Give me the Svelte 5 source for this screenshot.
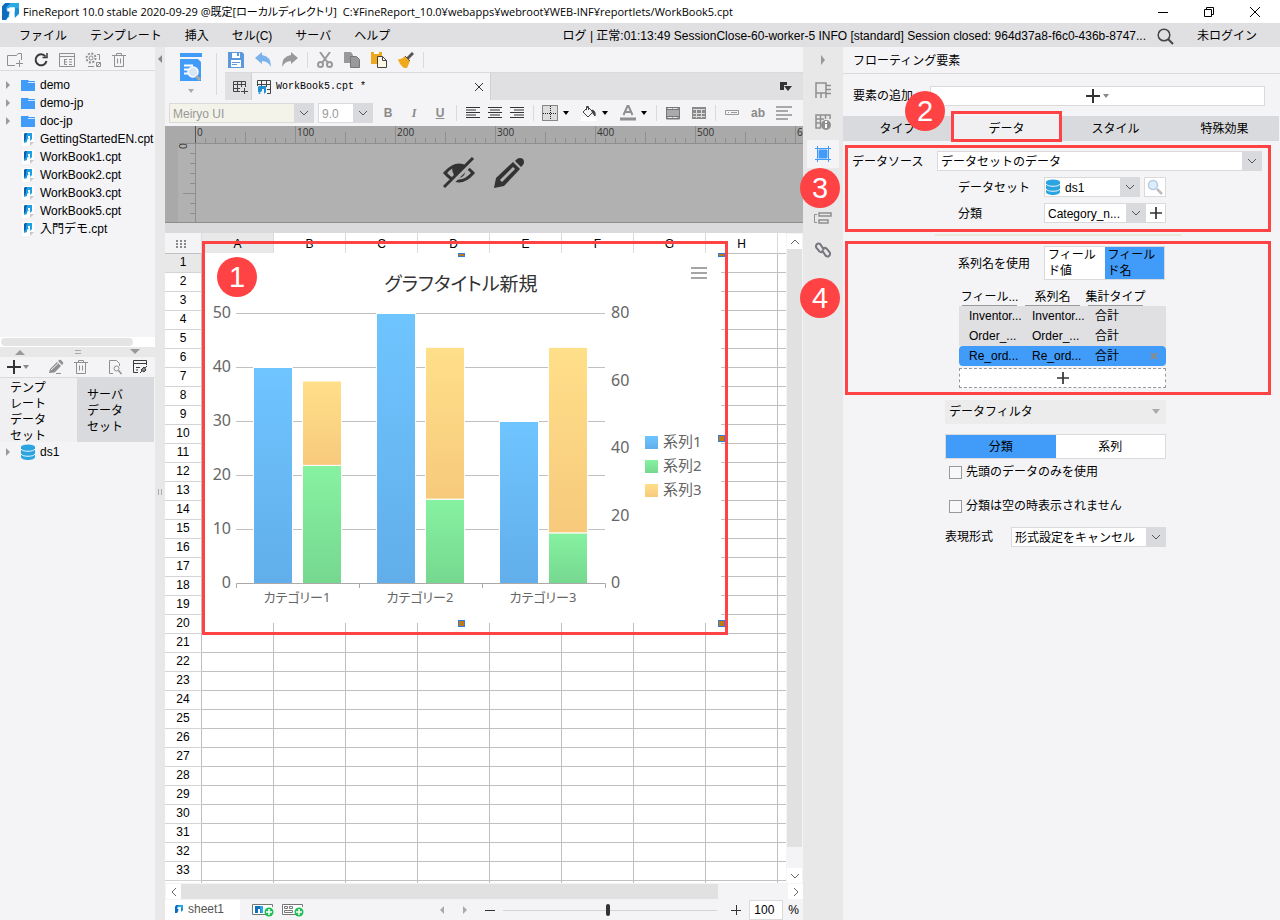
<script>
  const menus = ['ファイル', 'テンプレート', '挿入', 'セル(C)', 'サーバ', 'ヘルプ'];
  const folders = ['demo', 'demo-jp', 'doc-jp'];
  const files = [
    'GettingStartedEN.cpt',
    'WorkBook1.cpt',
    'WorkBook2.cpt',
    'WorkBook3.cpt',
    'WorkBook5.cpt',
    '入門デモ.cpt',
  ];
  const columns = ['A', 'B', 'C', 'D', 'E', 'F', 'G', 'H'];
  const rows = Array.from({ length: 34 }, (_, i) => i + 1);
  const panelTabs = ['タイプ', 'データ', 'スタイル', '特殊効果'];
  const fields = [
    ['Inventor...', 'Inventor...', '合計'],
    ['Order_...', 'Order_...', '合計'],
    ['Re_ord...', 'Re_ord...', '合計'],
  ];

  // chart
  const base = 330;
  const categories = [
    { name: 'カテゴリー1', s1: 40, s2: 35, s3: 25 },
    { name: 'カテゴリー2', s1: 50, s2: 25, s3: 45 },
    { name: 'カテゴリー3', s1: 30, s2: 15, s3: 55 },
  ];
  const legend = ['系列1', '系列2', '系列3'];
  const left = (v) => v * 5.4;
  const right = (v) => v * 3.375;

  let panelTab = $state('データ');
  let seriesMode = $state('name');
  let filterMode = $state('category');
  let selected = $state(2);
  let zoom = $state(100);

  // one tick every 10 units, as many as the ruler has room for
  let rulerWidth = $state(0);
  let ticks = $derived(Array.from({ length: Math.max(0, Math.floor((rulerWidth - 30) / 10) + 1) }, (_, i) => i));
</script>

{#snippet logo(size)}
  <svg width={size} height={size} viewBox="0 0 16 16">
    <path d="M3 0h13v10l-4 2V4H7v3h3l-3 3v3l-4 3z" fill="#29abe2" />
    <path d="M3 0h5L4 4v3h4l-4 9H0V3z" fill="#0d6cbf" />
    <path d="M12 5h4v5l-4 4z" fill="#1b8fd6" />
    <path d="M5 5h7v3H9v6l-2 1V8H5z" fill="#fff" />
  </svg>
{/snippet}

{#snippet fileIcon()}
  <svg width="14" height="16" viewBox="0 0 14 16">
    <path d="M1 1h12v9l-4 5H1z" fill="#fff" />
    <path d="M9 11h4l-4 4z" fill="#c8c8c8" />
    <path d="M4 2h7v6l-2 2V5H7v2h1L6 9v2L3 12z" fill="#1d9fe0" />
    <path d="M4 2h2L5 5v3l-2 3V3z" fill="#0b5fae" />
  </svg>
{/snippet}

{#snippet db()}
  <svg width="14" height="16" viewBox="1 0 14 16">
    <path d="M1 3v10c0 4 14 4 14 0V3z" fill="#2aa5e2" />
    <ellipse cx="8" cy="3" rx="7" ry="2.6" fill="#2aa5e2" />
    <path d="M1 5c1 3 13 3 14 0M1 10c1 3 13 3 14 0" fill="none" stroke="#f4f4f7" />
  </svg>
{/snippet}

{#snippet trash()}
  <svg width="16" height="16" viewBox="0 0 16 16" fill="none" stroke="#8f8f8f">
    <path d="M1 3.500h14M5.500 3V1.500h5V3M3.500 4v10.500h9V4M6.500 6.500v5M9.500 6.500v5" />
  </svg>
{/snippet}

{#snippet plus(size)}
  <svg width={size} height={size} viewBox="0 0 14 14"><path d="M7 0v14M0 7h14" stroke="#333" stroke-width="2" /></svg>
{/snippet}

{#snippet caret(color)}
  <svg width="8" height="6" viewBox="0 0 8 6"><path d="M1 1h6L4 5z" fill={color} /></svg>
{/snippet}

{#snippet chevron()}
  <svg class="chevron" width="10" height="6" viewBox="0 0 10 6"><path d="M1 1l4 4 4-4" fill="none" stroke="#555" /></svg>
{/snippet}

{#snippet lines(color, widths, from)}
  <svg width="16" height="14" viewBox="0 0 16 14" stroke={color} stroke-width="1">
    {#each widths as w, i}
      <path d="M{from === 'right' ? 15 - w : from === 'center' ? 8 - w / 2 : 1} {i * 2.5 + 1.5}h{w}" />
    {/each}
  </svg>
{/snippet}

<div class="app">
  <header class="titlebar">
    {@render logo(17)}
    <span class="title">FineReport 10.0 stable 2020-09-29 @既定[ローカルディレクトリ]</span>
    <span>C:¥FineReport_10.0¥webapps¥webroot¥WEB-INF¥reportlets/WorkBook5.cpt</span>
    <div class="window-buttons">
      <button aria-label="最小化"><svg width="12" height="12"><path d="M1 6.500h10" stroke="#000" /></svg></button>
      <button aria-label="元に戻す">
        <svg width="12" height="12" fill="none" stroke="#000"><path d="M1.500 3.500h7v7h-7zM3.500 3V1.500h7v7H9" /></svg>
      </button>
      <button aria-label="閉じる"><svg width="12" height="12"><path d="M1 1l10 10M11 1L1 11" stroke="#000" /></svg></button>
    </div>
  </header>

  <nav class="menubar">
    {#each menus as menu}
      <button>{menu}</button>
    {/each}
    <span class="log">ログ | 正常:01:13:49 SessionClose-60-worker-5 INFO [standard] Session closed: 964d37a8-f6c0-436b-8747...</span>
    <button class="search" aria-label="検索">
      <svg width="17" height="17" viewBox="0 0 17 17" fill="none" stroke="#444" stroke-width="1.500">
        <circle cx="7" cy="7" r="5.800" /><path d="M11 11l5 5" stroke-width="2" />
      </svg>
    </button>
    <button class="login">未ログイン</button>
  </nav>

  <div class="workspace">
    <aside class="left">
      <div class="tools">
        <button aria-label="新規フォルダ">
          <svg width="16" height="16" viewBox="0 0 16 16" fill="none" stroke="#8f8f8f"><path d="M8 13.500H.5v-10h9L11 1.500h3.500V8M12.500 8v7M9 11.500h7" /></svg>
        </button>
        <button aria-label="更新">
          <svg width="16" height="16" viewBox="0 0 16 16" fill="none" stroke="#3a3a3a" stroke-width="2"><path d="M12.500 4.500A5.500 5.500 0 1 0 13.500 9" /><path d="M9.500 5.500H14V1" stroke-width="1.500" /></svg>
        </button>
        <button aria-label="表示">
          <svg width="16" height="16" viewBox="0 0 16 16" fill="none" stroke="#8f8f8f"><path d="M.5 1.500h15v13H.5zM0 4.500h16M5.500 7v5.500M5.500 7.500H8M5.500 10H8M5.500 12.500H8M10 7.500h3M10 10h3M10 12.500h3" /></svg>
        </button>
        <button aria-label="設定">
          <svg width="16" height="16" viewBox="0 0 16 16" fill="none" stroke="#8f8f8f"><circle cx="6" cy="6" r="4.500" stroke-width="2" stroke-dasharray="2 1.500" /><circle cx="6" cy="6" r="2" /><path d="M12 2.500h2.500V8M3 14.500h6M11.500 10.500h4v4h-4zM12 14l3-3" /></svg>
        </button>
        <button aria-label="削除">{@render trash()}</button>
      </div>
      <ul class="tree">
        {#each folders as name}
          <li>
            <svg class="toggle" width="6" height="10"><path d="M1 1l4 4-4 4z" fill="#999" /></svg>
            <svg width="14" height="12"><path d="M0 1h7l1 1h6v10H0z" fill="#419bf9" /><path d="M7 3.500h7" stroke="#cfe4fd" /></svg>
            {name}
          </li>
        {/each}
        {#each files as name}
          <li><span class="toggle"></span>{@render fileIcon()}{name}</li>
        {/each}
      </ul>
      <div class="tree-scroll"><i></i></div>
      <div class="fold">
        <svg width="12" height="6"><path d="M1 6l5-5 5 5z" fill="#999" /></svg>
        <svg width="6" height="6" stroke="#aaa"><path d="M0 1.500h6M0 4.500h6" /></svg>
        <svg width="12" height="6"><path d="M1 0l5 5 5-5z" fill="#999" /></svg>
      </div>
      <div class="tools data-tools">
        <button class="add" aria-label="追加">{@render plus(14)}{@render caret('#888')}</button>
        <i class="sep"></i>
        <button aria-label="編集">
          <svg width="16" height="16" viewBox="0 0 16 16" fill="#8f8f8f"><path d="M1 14l1-4L9 3l4 4-6.500 6.500zM10 2l1-1q1-1 3 1t1 3l-1 1z" /><path d="M3 11L10 4.500" stroke="#f4f4f7" /><path d="M8 14.500h5" stroke="#8f8f8f" /></svg>
        </button>
        <button aria-label="削除">{@render trash()}</button>
        <i class="sep"></i>
        <button aria-label="プレビュー">
          <svg width="16" height="16" viewBox="0 0 16 16" fill="none" stroke="#8f8f8f"><path d="M6 14.500H2.500v-13h7l3 3V7" /><circle cx="9.500" cy="9.500" r="2.500" /><path d="M11.500 11.500l3 3.500" stroke-width="1.500" /></svg>
        </button>
        <button aria-label="接続">
          <svg width="16" height="16" viewBox="0 0 16 16" fill="none" stroke="#3a3a3a"><path d="M6 13.500H1.500v-12h13V6M1 4.500h14M4 8.500h4M4 11h2M8 14l2-2M13 9l2-2" /><path d="M9 11l3-3 2 3-2 2z" fill="#888" /></svg>
        </button>
      </div>
      <div class="data-tabs">
        <button class="active">テンプレートデータセット</button>
        <button>サーバデータセット</button>
      </div>
      <ul class="tree datasets">
        <li><svg class="toggle" width="6" height="10"><path d="M1 1l4 4-4 4z" fill="#999" /></svg>{@render db()}ds1</li>
      </ul>
    </aside>

    <div class="splitter">
      <svg width="6" height="10"><path d="M5 1L1 5l4 4z" fill="#888" /></svg>
      <svg class="grip" width="6" height="6" stroke="#aaa"><path d="M1.500 0v6M4.500 0v6" /></svg>
    </div>

    <main class="center">
      <div class="top">
        <button class="preview" aria-label="プレビュー">
          <svg width="22" height="30" viewBox="0 0 22 30">
            <path d="M0 0h22v4H0zM0 6h18l3 3v19H0z" fill="#419bf9" />
            <path d="M4 12.500h9M4 16.500h4M4 20.500h4" stroke="#fff" stroke-width="2" />
            <circle cx="13" cy="19" r="5" fill="#d6e6f5" stroke="#fff" stroke-width="1.500" />
            <path d="M16 23l4 4" stroke="#aaa" stroke-width="2.500" />
          </svg>
          {@render caret('#aaa')}
        </button>
        <div class="top-rows">
          <div class="actions">
            <button aria-label="保存">
              <svg width="16" height="16" viewBox="0 0 16 16"><path d="M0 0h14l2 2v14H0z" fill="#5c98dc" /><path d="M4 1h8v5H4zM3 8h10v7H3z" fill="#fff" /><path d="M9 1h2v3H9zM4 10h8v1H4zM4 12h5v1H4z" fill="#5c98dc" /></svg>
            </button>
            <button aria-label="元に戻す">
              <svg width="16" height="16" viewBox="0 0 16 16"><path d="M0 6l7-6v3q9 1 9 12-3-6-9-6v3z" fill="#7bb2ec" /></svg>
            </button>
            <button aria-label="やり直し">
              <svg width="16" height="16" viewBox="0 0 16 16"><path d="M16 6L9 0v3Q0 4 0 15q3-6 9-6v3z" fill="#999" /></svg>
            </button>
            <i class="sep"></i>
            <button aria-label="切り取り">
              <svg width="16" height="16" viewBox="0 0 16 16" fill="none" stroke="#999" stroke-width="2"><path d="M3 0l8 11M13 0L5 11" /><circle cx="3.500" cy="12.500" r="2.500" /><circle cx="12.500" cy="12.500" r="2.500" /></svg>
            </button>
            <button aria-label="コピー">
              <svg width="16" height="16" viewBox="0 0 16 16" fill="#999"><path d="M0 0h7l2 3v8H0z" /><path d="M6.500 4.500h6l3 3v8h-9z" stroke="#777" /></svg>
            </button>
            <button aria-label="貼り付け">
              <svg width="16" height="16" viewBox="0 0 16 16"><path d="M0 0h11v12H0z" fill="#f0a81c" /><path d="M3 0h5v2H3z" fill="#fff" /><path d="M6.500 4.500h5l4 4v7h-9z" fill="#fff8e8" stroke="#444" /><path d="M11.500 4.500v4h4" fill="none" stroke="#444" /></svg>
            </button>
            <button aria-label="書式のコピー">
              <svg width="16" height="16" viewBox="0 0 16 16"><path d="M15 1L9 7" stroke="#555" stroke-width="3" /><path d="M7 4l5 5-3 7H6Q1 12 0 7q4 1 7-3z" fill="#f0a81c" /><path d="M7 4l5 5" stroke="#555" /></svg>
            </button>
            <i class="sep"></i>
          </div>
          <div class="doc-tabs">
            <button class="new-tab" aria-label="新規">
              <svg width="16" height="16" viewBox="0 0 16 16" fill="none" stroke="#444"><path d="M8 12.500H1.500v-10h12V8M1 5.500h13M1 9.500h7M5.500 2v11M9.500 2v6M12.500 9v6M9 12.500h7" /></svg>
            </button>
            <div class="doc-tab">
              <svg width="14" height="14" viewBox="0 0 14 14"><path d="M.5 6V.5h13v13H10M0 4.500h14M4.500 0v6M9.500 0v7M10 9.500h4" fill="none" stroke="#444" /><path d="M2 6h7v6l-2 2V9H5v2l-4 3h3L1 12V7z" fill="#1d8fd6" /></svg>
              <span>WorkBook5.cpt *</span>
              <button aria-label="閉じる"><svg width="10" height="10"><path d="M1 1l8 8M9 1L1 9" stroke="#333" /></svg></button>
            </div>
            <button class="tab-list" aria-label="タブ一覧">
              <svg width="12" height="10"><path d="M0 0h7v3H4v5H0z" fill="#333" /><path d="M4 4h8L8 9z" fill="#333" /></svg>
            </button>
          </div>
        </div>
      </div>

      <div class="format">
        <div class="select font">
          <select aria-label="フォント" disabled><option>Meiryo UI</option></select>{@render chevron()}
        </div>
        <div class="select size">
          <select aria-label="サイズ" disabled><option>9.0</option></select>{@render chevron()}
        </div>
        <div class="group wide text-style">
          <button><b>B</b></button><button><em>I</em></button><button><u>U</u></button>
        </div>
        <i class="sep"></i>
        <div class="group">
          <button aria-label="左揃え">{@render lines('#333', [14, 10, 14, 10, 14], 'left')}</button>
          <button aria-label="中央揃え">{@render lines('#333', [14, 10, 14, 10, 14], 'center')}</button>
          <button aria-label="右揃え">{@render lines('#333', [14, 10, 14, 10, 14], 'right')}</button>
        </div>
        <i class="sep"></i>
        <div class="group drops">
          <button aria-label="罫線">
            <svg width="16" height="16" viewBox="0 0 16 16" fill="#ddd" stroke="#222" stroke-dasharray="1 1"><path d="M.5 .5h15v15H.5zM8.500 1v14M1 8.500h14" /></svg>
            {@render caret('#000')}
          </button>
          <button aria-label="塗りつぶし">
            <svg width="16" height="16" viewBox="0 0 16 16" fill="none" stroke="#444"><path d="M0 12h16v4H0z" fill="#fff" stroke="none" /><path d="M2 7l5-5 5 5-5 5zM5.500 5V1.500h2V5" /><path d="M11 5q4 1 3 6l-3-4z" fill="#444" /></svg>
            {@render caret('#000')}
          </button>
          <button aria-label="文字色">
            <svg width="16" height="16" viewBox="0 0 16 16" fill="none" stroke="#8f8f8f" stroke-width="2"><path d="M3.500 10L7.500 1h1l4 9M5 7h6" /><path d="M0 14h16" stroke-width="3" /></svg>
            {@render caret('#000')}
          </button>
        </div>
        <i class="sep"></i>
        <div class="group wide">
          <button aria-label="結合">
            <svg width="16" height="14" viewBox="0 0 16 14"><path d="M1 1h14v12H1z" fill="#aaa" /><path d="M1.500 1v12h13V1M1 3.500h14M1 10.500h14M1 1.500h14M1 12.500h14" fill="none" stroke="#777" /><path d="M3 2.500h10M3 11.500h10" stroke="#e8e8e8" stroke-dasharray="4 1" /></svg>
          </button>
          <button aria-label="結合解除">
            <svg width="16" height="14" viewBox="0 0 16 14"><path d="M1 1h14v12H1z" fill="#8a8a8a" /><path d="M2 3.500h12M2 7.500h12M2 10.500h12M5.500 3v9M10.500 3v9" stroke="#ddd" /></svg>
          </button>
        </div>
        <i class="sep"></i>
        <div class="group wide">
          <button aria-label="ウィジェット">
            <svg width="16" height="8" viewBox="0 0 16 8" fill="none" stroke="#999"><path d="M1.500 1.500h13v4h-13zM4 3.500h1M7 3.500h6" /></svg>
          </button>
          <button class="ab">ab</button>
          <button aria-label="段落">
            <svg width="16" height="14" viewBox="0 0 16 14" stroke="#8f8f8f" stroke-width="1.500"><path d="M0 1h16M0 5h12M0 9h16M0 13h12" /></svg>
          </button>
        </div>
      </div>

      <div class="banner" bind:clientWidth={rulerWidth}>
        <svg class="ruler" width="100%" height="97">
          <rect width="100%" height="17" fill="#a9a9a9" />
          <rect width="13" height="97" fill="#a9a9a9" />
          <path d="M30.500 0v97" stroke="#8e8e8e" />
          <rect x="30" y="17" width="100%" height="1" fill="#8e8e8e" />
          {#each ticks as i}
            <path d="M{30.5 + i * 10} {i % 10 === 0 ? 0 : i % 5 === 0 ? 6 : 12}V17" stroke={i === 0 ? '#555' : '#8e8e8e'} />
            {#if i % 10 === 0}<text x={32 + i * 10} y="10">{i * 10}</text>{/if}
            {#if i < 8}<path d="M{i === 0 ? 14 : i === 5 ? 18 : 25} {17.5 + i * 10}H30" stroke="#8e8e8e" />{/if}
          {/each}
          <text transform="translate(22 23) rotate(-90)">0</text>
        </svg>
        <div class="banner-tools">
          <button aria-label="非表示">
            <svg width="32" height="32" viewBox="0 0 32 32" fill="none" stroke="#333" stroke-width="3">
              <path d="M2 16Q16 0 30 16Q16 32 2 16z" /><path d="M9 10q8-5 14 0 0 10-7 11-7-1-7-11z" fill="#333" stroke="none" />
              <path d="M3 31L31 3" stroke="#b1b1b1" stroke-width="5" /><path d="M1 30L30 1" stroke-width="3" />
            </svg>
          </button>
          <button aria-label="編集">
            <svg width="32" height="32" viewBox="0 0 32 32" fill="#333">
              <path d="M1 31l2-10L20 5l7 7-16 17z" /><path d="M22 4l2-2q3-2 6 0 2 3 0 6l-2 2z" />
              <path d="M8 24L21 11" stroke="#b1b1b1" stroke-width="3" />
            </svg>
          </button>
        </div>
      </div>

      <div class="sheet-area">
        <div class="sheet">
          <table>
            <colgroup>
              <col class="row-head" />
              {#each columns as c}<col class="cell" />{/each}
              <col />
            </colgroup>
            <thead>
              <tr>
                <th class="corner">
                  <svg width="12" height="9" fill="#8a8a8a">
                    {#each [0, 3, 6] as y}{#each [0, 4, 8] as x}<rect {x} {y} width="2" height="2" />{/each}{/each}
                  </svg>
                </th>
                {#each columns as c, i}<th class:current={i === 0}>{c}</th>{/each}
                <th></th>
              </tr>
            </thead>
            <tbody>
              {#each rows as r}
                <tr>
                  <th class:current={r === 1}>{r}</th>
                  {#each columns as c}<td></td>{/each}
                  <td></td>
                </tr>
              {/each}
            </tbody>
          </table>

          <!-- floating chart element -->
          <div class="floating">
            <svg class="chart" width="519" height="370" viewBox="0 0 519 370">
              <defs>
                <linearGradient id="s1" x2="0" y2="1"><stop stop-color="#6fc5ff" /><stop offset="1" stop-color="#61aeea" /></linearGradient>
                <linearGradient id="s2" x2="0" y2="1"><stop stop-color="#86f2a1" /><stop offset="1" stop-color="#76d88f" /></linearGradient>
                <linearGradient id="s3" x2="0" y2="1"><stop stop-color="#ffdf8a" /><stop offset="1" stop-color="#f7ca7b" /></linearGradient>
              </defs>
              <text class="chart-title" x="259" y="38" text-anchor="middle">グラフタイトル新規</text>
              <path d="M489 15h16M489 20h16M489 25h16" stroke="#a5a5a5" stroke-width="2" />
              {#each [0, 10, 20, 30, 40, 50] as v}
                <text x="29" y={base - left(v) + 5} text-anchor="end">{v}</text>
                {#if v}<path d="M34 {base - left(v) + 0.5}h369" stroke="#c0c0c0" />{/if}
              {/each}
              {#each [0, 20, 40, 60, 80] as v}
                <text x="409" y={base - right(v) + 5}>{v}</text>
              {/each}
              {#each categories as c, i}
                <g stroke="#fff">
                  <rect x={51.5 + i * 123} y={base - left(c.s1) + 0.5} width="39" height={left(c.s1)} fill="url(#s1)" />
                  <rect x={100.5 + i * 123} y={base - right(c.s2) + 0.5} width="39" height={right(c.s2)} fill="url(#s2)" />
                  <rect x={100.5 + i * 123} y={base - right(c.s2 + c.s3) + 0.5} width="39" height={right(c.s3)} fill="url(#s3)" />
                </g>
                <text class="category" x={95 + i * 123} y="349" text-anchor="middle">{c.name}</text>
              {/each}
              <path d="M34.500 335v-4.500h369v4.500M157.500 331v4M280.500 331v4" fill="none" stroke="#aaa" />
              {#each legend as name, i}
                <rect x="443" y={183 + i * 24} width="13" height="13" fill="url(#s{i + 1})" />
                <text class="legend" x="461" y={194 + i * 24}>{name}</text>
              {/each}
            </svg>
            <i class="handle n"></i><i class="handle ne"></i><i class="handle e"></i>
            <i class="handle se"></i><i class="handle s"></i>
          </div>
          <div class="mark chart-mark"></div>
          <span class="badge b1">1</span>
        </div>
        <div class="vscroll">
          <button aria-label="上へ"><svg width="10" height="6"><path d="M1 5l4-4 4 4" fill="none" stroke="#666" /></svg></button>
          <i></i><span></span>
          <button aria-label="下へ"><svg width="10" height="6"><path d="M1 1l4 4 4-4" fill="none" stroke="#666" /></svg></button>
        </div>
      </div>

      <div class="hscroll">
        <button aria-label="左へ"><svg width="6" height="10"><path d="M5 1L1 5l4 4" fill="none" stroke="#666" /></svg></button>
        <i></i><span></span>
        <button aria-label="右へ"><svg width="6" height="10"><path d="M1 1l4 4-4 4" fill="none" stroke="#666" /></svg></button>
      </div>

      <div class="sheet-bar">
        <button class="sheet-tab">{@render logo(8)}sheet1</button>
        <button class="add-sheet" aria-label="シート追加">
          <svg width="22" height="14" viewBox="0 0 22 14"><path d="M16 11.500H.5v-10h20V4" fill="#fff" stroke="#777" /><path d="M3 3h7v7H8V6H6v4H3z" fill="#0f6fc0" /><path d="M8 3h3v7H9z" fill="#29abe2" /><circle cx="17" cy="9" r="4.500" fill="#1fbf55" /><path d="M17 6v6M14 9h6" stroke="#fff" stroke-width="1.500" /></svg>
        </button>
        <button class="add-sheet" aria-label="フォーム追加">
          <svg width="22" height="14" viewBox="0 0 22 14"><path d="M16 11.500H.5v-10h20V4M2.500 3.500h3v2h-3zM7.500 3.500h3v2h-3zM2.500 7.500h8v2h-8z" fill="#fff" stroke="#777" /><circle cx="17" cy="9" r="4.500" fill="#1fbf55" /><path d="M17 6v6M14 9h6" stroke="#fff" stroke-width="1.500" /></svg>
        </button>
        <div class="zoom">
          <button aria-label="前のシート"><svg width="6" height="8"><path d="M5 0L1 4l4 4z" fill="#aaa" /></svg></button>
          <button aria-label="次のシート"><svg width="6" height="8"><path d="M1 0l4 4-4 4z" fill="#aaa" /></svg></button>
          <button aria-label="縮小"><svg width="10" height="10"><path d="M0 5.500h10" stroke="#333" /></svg></button>
          <input type="range" min="10" max="194" aria-label="ズーム" bind:value={zoom} />
          <button aria-label="拡大"><svg width="10" height="10"><path d="M0 5.500h10M5.500 0v10" stroke="#333" /></svg></button>
          <label><input type="text" bind:value={zoom} />%</label>
        </div>
      </div>
    </main>

    <div class="rail">
      <button class="collapse" aria-label="折りたたむ"><svg width="6" height="10"><path d="M1 0l4 5-4 5z" fill="#999" /></svg></button>
      <button aria-label="セル要素">
        <svg width="16" height="16" viewBox="0 0 16 16" fill="none" stroke="#8f8f8f"><path d="M1 16V1h10v10H1M11 1v15M6 11v5M11 3.500h5M11 7.500h5M11 11.500h5" stroke-width="1.500" /></svg>
      </button>
      <button aria-label="セル属性">
        <svg width="16" height="16" viewBox="0 0 16 16" fill="none" stroke="#8f8f8f"><path d="M6 14H1V1h14v4M1 5h8M1 9h5M5.500 1v13M10.500 1v4" stroke-width="1.500" /><circle cx="11" cy="11" r="5" fill="#8f8f8f" stroke="none" /><path d="M11 10v4M11 7v2" stroke="#fff" stroke-width="2" /></svg>
      </button>
      <button class="active" aria-label="フローティング要素">
        <svg width="16" height="16" viewBox="0 0 16 16" fill="none" stroke="#419bf9"><path d="M2.500 0v16M13.500 0v16M0 2.500h16M0 13.500h16" /><path d="M4 4h8v8H4z" fill="#419bf9" /></svg>
      </button>
      <button aria-label="ウィジェット設定"><svg width="16" height="16" fill="none" stroke="#8f8f8f"><path d="M1.500 4.500h13v7h-13z" /></svg></button>
      <button aria-label="条件属性">
        <svg width="18" height="14" viewBox="0 0 18 14" fill="none" stroke="#8f8f8f"><path d="M3 3.500H.5v8H3" /><path d="M5 2h12v3H5zM5 9h9v3H5z" stroke-width="1.500" /></svg>
      </button>
      <button aria-label="ハイパーリンク">
        <svg width="16" height="16" viewBox="0 0 16 16" fill="none" stroke="#77777f" stroke-width="2"><path d="M9 8L5.500 2.500Q3.500 .5 1.800 2.300 .2 4 1.500 6L4.500 9.500q2 1.500 4 0" /><path d="M7 8l3.500 5.500q2 2 3.700 .2 1.600-1.700 .3-3.700L11.500 6.500q-2-1.500-4 0" /></svg>
      </button>
      <span class="badge b3">3</span>
      <span class="badge b4">4</span>
    </div>

    <aside class="panel">
      <h2>フローティング要素</h2>
      <div class="add-row">
        <span>要素の追加</span>
        <button aria-label="要素の追加">{@render plus(14)}{@render caret('#888')}</button>
        <span class="badge b2">2</span>
      </div>
      <div class="panel-tabs">
        {#each panelTabs as tab}
          <button class:active={panelTab === tab} onclick={() => (panelTab = tab)}>
            {tab}
            {#if tab === 'データ'}<span class="mark tab-mark"></span>{/if}
          </button>
        {/each}
      </div>

      <section class="source">
        <div class="field main-field">
          <label for="source">データソース</label>
          <div class="select"><select id="source"><option>データセットのデータ</option></select>{@render chevron()}</div>
        </div>
        <div class="field">
          <label for="dataset">データセット</label>
          <div class="select dataset">{@render db()}<select id="dataset"><option>ds1</option></select>{@render chevron()}</div>
          <button class="box" aria-label="プレビュー">
            <svg width="16" height="16" viewBox="0 0 16 16"><circle cx="6" cy="6" r="4.500" fill="#dbeeff" stroke="#b5c9e0" stroke-width="1.500" /><path d="M10 10l5 5" stroke="#bbb" stroke-width="2.500" /></svg>
          </button>
        </div>
        <div class="field">
          <label for="category">分類</label>
          <div class="select category-select"><select id="category"><option>Category_n...</option></select>{@render chevron()}</div>
          <button class="box joined" aria-label="追加">{@render plus(12)}</button>
        </div>
        <div class="mark"></div>
      </section>

      <hr />

      <section class="series">
        <div class="field">
          <span class="label">系列名を使用</span>
          <div class="switch series-switch">
            <button class:active={seriesMode === 'value'} onclick={() => (seriesMode = 'value')}>フィールド値</button>
            <button class:active={seriesMode === 'name'} onclick={() => (seriesMode = 'name')}>フィールド名</button>
          </div>
        </div>
        <table class="fields">
          <colgroup><col class="wide-col" /><col class="wide-col" /><col /><col class="remove-col" /></colgroup>
          <thead>
            <tr><th><span>フィール...</span></th><th><span>系列名</span></th><th colspan="2"><span>集計タイプ</span></th></tr>
          </thead>
          <tbody>
            {#each fields as row, i}
              <tr class:selected={selected === i} onclick={() => (selected = i)}>
                {#each row as value}<td>{value}</td>{/each}
                <td class="remove">
                  {#if selected === i}
                    <button aria-label="削除"><svg width="8" height="8"><path d="M1 1l6 6M7 1L1 7" stroke="#8a8a8a" stroke-width="2" /></svg></button>
                  {/if}
                </td>
              </tr>
            {/each}
          </tbody>
        </table>
        <button class="add-field" aria-label="追加">{@render plus(12)}</button>
        <div class="mark"></div>
      </section>

      <section class="filter">
        <button class="filter-head">データフィルタ<svg width="10" height="6"><path d="M1 0h8L5 5z" fill="#aaa" /></svg></button>
        <div class="switch">
          <button class:active={filterMode === 'category'} onclick={() => (filterMode = 'category')}>分類</button>
          <button class:active={filterMode === 'series'} onclick={() => (filterMode = 'series')}>系列</button>
        </div>
        <label class="check"><input type="checkbox" />先頭のデータのみを使用</label>
        <label class="check"><input type="checkbox" />分類は空の時表示されません</label>
        <div class="present">
          <label for="present">表現形式</label>
          <div class="select"><select id="present"><option>形式設定をキャンセル</option></select>{@render chevron()}</div>
        </div>
      </section>
    </aside>
  </div>
</div>

<style>
  :global(body) {
    margin: 0;
  }

  .app {
    display: flex;
    flex-direction: column;
    height: 100vh;
    overflow: hidden;
    background: #f4f4f7;
    color: #000;
    font-family: 'Liberation Sans', 'Noto Sans CJK JP', sans-serif;
    font-size: 12px;
    line-height: 16px;
  }

  .app * {
    box-sizing: border-box;
  }

  svg {
    display: block;
    flex: none;
  }

  i {
    display: block;
  }

  button,
  select,
  input {
    margin: 0;
    padding: 0;
    border: 0;
    border-radius: 0;
    background: none;
    color: inherit;
    font: inherit;
  }

  .sep {
    width: 1px;
    height: 16px;
    background: #dadadd;
  }

  /* title and menu */
  .titlebar {
    display: flex;
    align-items: center;
    flex: none;
    height: 23px;
    padding-left: 2px;
    background: #fff;
    font-family: 'Open Sans', 'Noto Sans CJK JP', sans-serif;
    font-size: 11px;
    font-feature-settings: 'palt';
    white-space: nowrap;
  }

  .title {
    min-width: 308px;
    margin: 0 6px 0 4px;
  }

  .window-buttons {
    display: flex;
    gap: 34px;
    margin-left: auto;
    padding-right: 19px;
  }

  .menubar {
    display: flex;
    align-items: center;
    flex: none;
    gap: 23px;
    height: 24px;
    padding: 2px 23px 0 19px;
    background: #e0e0e3;
    white-space: nowrap;
  }

  .log {
    margin-left: auto;
  }

  .search {
    margin-left: -12px;
  }

  .workspace {
    display: flex;
    flex: 1;
    min-height: 0;
  }

  /* left side */
  .left {
    display: flex;
    flex-direction: column;
    flex: none;
    width: 155px;
  }

  .tools {
    display: flex;
    align-items: center;
    flex: none;
    gap: 10px;
    height: 24px;
    padding: 2px 7px 0;
    border-bottom: 1px solid #dadadd;
  }

  .data-tools {
    gap: 9px;
    height: 21px;
    padding-top: 0;
  }

  .add {
    display: flex;
    align-items: center;
    gap: 1px;
  }

  .tree {
    flex: none;
    height: 266px;
    margin: 0;
    padding: 5px 0 0 5px;
    overflow: hidden;
    list-style: none;
  }

  .tree li {
    display: flex;
    align-items: center;
    gap: 5px;
    height: 18px;
    white-space: nowrap;
  }

  .tree .toggle {
    width: 6px;
    margin-right: 5px;
  }

  .tree.datasets {
    height: auto;
    padding-top: 1px;
  }

  .tree-scroll {
    height: 10px;
    padding: 1px;
    background: #fff;
  }

  .tree-scroll i {
    width: 132px;
    height: 8px;
    border-radius: 4px;
    background: #e4e4e4;
  }

  .fold {
    display: flex;
    align-items: center;
    justify-content: space-between;
    height: 10px;
    padding: 0 14px;
    background: #e8e8e8;
  }

  .data-tabs {
    display: flex;
    height: 64px;
  }

  .data-tabs button {
    width: 77px;
    padding: 2px 31px 0 10px;
    background: #d9dadd;
    text-align: left;
  }

  .data-tabs .active {
    background: #f0f0f2;
  }

  .splitter {
    display: flex;
    flex-direction: column;
    align-items: center;
    flex: none;
    width: 10px;
    padding-top: 7px;
    background: #e8e8e8;
  }

  .grip {
    margin: auto 0;
  }

  /* center */
  .center {
    display: flex;
    flex-direction: column;
    flex: 1;
    min-width: 0;
  }

  .top {
    display: flex;
    flex: none;
    height: 53px;
  }

  .preview {
    display: flex;
    flex-direction: column;
    align-items: center;
    gap: 5px;
    width: 52px;
    height: 42px;
    margin: 6px 8px 0 0;
    border-right: 1px solid #dadadd;
  }

  .top-rows {
    flex: 1;
    min-width: 0;
  }

  .actions {
    display: flex;
    align-items: center;
    gap: 11px;
    height: 25px;
    padding-left: 3px;
  }

  .actions .sep {
    margin: 0 -2px;
  }

  .doc-tabs {
    display: flex;
    height: 28px;
    border-top: 1px solid #dadadd;
    background: #e0e0e3;
  }

  .new-tab {
    width: 27px;
    padding-left: 7px;
    border-right: 1px solid #d0d0d4;
  }

  .doc-tab {
    display: flex;
    align-items: center;
    width: 239px;
    padding: 0 6px 0 5px;
    border-right: 1px solid #d0d0d4;
    background: #f4f4f7;
    font-family: 'Liberation Mono', monospace;
    font-size: 10px;
  }

  .doc-tab span {
    flex: 1;
    margin-left: 5px;
  }

  .tab-list {
    margin: 0 11px 0 auto;
  }

  .format {
    display: flex;
    align-items: center;
    flex: none;
    height: 26px;
    padding-left: 4px;
  }

  .format .sep {
    margin: 0 8px;
  }

  .group {
    display: flex;
    align-items: center;
    gap: 6px;
  }

  .group.wide {
    gap: 10px;
  }

  .group.drops {
    gap: 11px;
  }

  .group button {
    display: flex;
    align-items: center;
    justify-content: center;
    gap: 4px;
    min-width: 16px;
  }

  .text-style {
    color: #8a8a8a;
    font-weight: bold;
  }

  .text-style em {
    font-family: 'Liberation Serif', serif;
  }

  .ab {
    color: #8a8a8a;
    font-weight: bold;
  }

  .select {
    position: relative;
    display: flex;
    align-items: center;
    height: 20px;
    border: 1px solid #dadadd;
    background: #fff;
  }

  .select select {
    flex: 1;
    min-width: 0;
    height: 18px;
    padding: 1px 22px 0 3px;
    appearance: none;
    opacity: 1;
    background: linear-gradient(#d9dadd, #d9dadd) right / 19px 18px no-repeat;
  }

  .select :global(.chevron) {
    position: absolute;
    right: 4px;
    pointer-events: none;
  }

  .font {
    width: 145px;
    margin-right: 4px;
    background: #f3f3e9;
    color: #999;
  }

  .size {
    width: 55px;
    margin-right: 7px;
    color: #999;
  }

  .banner {
    position: relative;
    display: flex;
    justify-content: center;
    flex: none;
    height: 107px;
    border-bottom: 10px solid #dadadd;
    background: #b1b1b1;
    overflow: hidden;
  }

  .ruler {
    position: absolute;
    inset: 0;
    border-bottom: 1px solid #8e8e8e;
    fill: #333;
    font-family: 'Open Sans', sans-serif;
    font-size: 10px;
  }

  .banner-tools {
    position: relative;
    display: flex;
    gap: 18px;
    margin-top: 31px;
    height: 32px;
  }

  .sheet-area {
    display: flex;
    flex: 1;
    min-height: 0;
  }

  .sheet {
    position: relative;
    flex: 1;
    min-width: 0;
    overflow: hidden;
    background: #fff;
  }

  .sheet table {
    width: 100%;
    border-collapse: separate;
    border-spacing: 0;
    table-layout: fixed;
  }

  .row-head {
    width: 37px;
  }

  .cell {
    width: 72px;
  }

  .sheet th {
    height: 19px;
    padding: 0;
    border-right: 1px solid #c0c0c0;
    border-bottom: 1px solid #d4d4d8;
    font-weight: normal;
    line-height: 16px;
    vertical-align: top;
  }

  .sheet thead th {
    height: 21px;
    padding-top: 2px;
    border-right-color: #dadadd;
    border-bottom-color: #c0c0c0;
    line-height: 18px;
  }

  .sheet td {
    padding: 0;
    border-right: 1px solid #c0c0c0;
    border-bottom: 1px solid #c0c0c0;
  }

  .sheet tr > :last-child {
    border-right: 0;
  }

  .sheet .current {
    background: #e8e8e8;
  }

  .sheet .corner {
    background: #f4f4f7;
  }

  .corner svg {
    margin: 5px auto 0 11px;
  }

  .floating {
    position: absolute;
    top: 20px;
    left: 37px;
    background: #fff;
  }

  .chart {
    fill: #666;
    font-family: 'Noto Sans', 'Noto Sans CJK JP', sans-serif;
    font-size: 16px;
    font-feature-settings: 'palt';
  }

  .chart-title {
    fill: #333;
    font-size: 19px;
  }

  .category {
    font-size: 13px;
  }

  .legend {
    font-size: 15px;
  }

  .handle {
    position: absolute;
    width: 7px;
    height: 7px;
    border: 1px solid #2f7de0;
    background: #c47a12;
  }

  .n,
  .s {
    left: 256px;
  }

  .ne,
  .e,
  .se {
    right: -4px;
  }

  .n,
  .ne {
    top: 0;
    height: 4px;
  }

  .e {
    top: 182px;
  }

  .s,
  .se {
    bottom: -4px;
  }

  .mark {
    position: absolute;
    inset: 0;
    border: 3px solid #ff4243;
    pointer-events: none;
  }

  .chart-mark {
    inset: 8px auto auto 37px;
    width: 526px;
    height: 394px;
  }

  .badge {
    position: absolute;
    z-index: 2;
    width: 40px;
    height: 40px;
    border-radius: 50%;
    background: #ff4243;
    color: #fff;
    font-size: 29px;
    line-height: 41px;
    text-align: center;
  }

  .b1 {
    top: 24px;
    left: 52px;
  }

  .b2 {
    top: 17px;
    left: 62px;
  }

  .b3 {
    top: 121px;
    left: -3px;
  }

  .b4 {
    top: 231px;
    left: -3px;
  }

  .vscroll,
  .hscroll {
    display: flex;
    flex: none;
    background: #f4f4f7;
  }

  .vscroll {
    flex-direction: column;
    width: 17px;
    padding: 1px 1px 0;
  }

  .hscroll {
    height: 17px;
    padding: 1px 0 1px 1px;
  }

  .vscroll button,
  .hscroll button {
    display: flex;
    align-items: center;
    justify-content: center;
    flex: none;
    width: 15px;
    height: 15px;
    background: #fff;
  }

  .vscroll i,
  .hscroll i {
    background: #e1e1e1;
  }

  .vscroll i {
    flex: 598;
  }

  .vscroll span {
    flex: 21;
  }

  .hscroll i {
    flex: 537;
  }

  .hscroll span {
    flex: 70;
  }

  .sheet-bar {
    display: flex;
    align-items: center;
    flex: none;
    height: 20px;
  }

  .sheet-tab {
    display: flex;
    align-items: center;
    gap: 5px;
    width: 75px;
    height: 20px;
    margin-right: 12px;
    padding: 0 0 2px 10px;
    background: #fff;
    color: #555;
  }

  .add-sheet {
    margin-right: 8px;
  }

  .zoom {
    display: flex;
    align-items: center;
    gap: 17px;
    margin-left: auto;
    padding-right: 4px;
  }

  .zoom input[type='range'] {
    width: 214px;
    height: 12px;
    margin: 0 -3px 0 -9px;
    appearance: none;
    background: linear-gradient(#d4d4d8, #d4d4d8) center / 100% 1px no-repeat;
  }

  .zoom input[type='range']::-webkit-slider-thumb {
    width: 4px;
    height: 12px;
    appearance: none;
    border-radius: 2px;
    background: #333;
  }

  .zoom label {
    display: flex;
    align-items: center;
    gap: 5px;
    margin-left: -9px;
  }

  .zoom input[type='text'] {
    width: 34px;
    height: 20px;
    padding-left: 4px;
    border: 1px solid #dadadd;
    background: #fff;
  }

  /* icon rail */
  .rail {
    position: relative;
    display: flex;
    flex-direction: column;
    align-items: center;
    flex: none;
    gap: 4px;
    width: 40px;
    background: #e8e8e8;
  }

  .rail button {
    display: flex;
    align-items: center;
    justify-content: center;
    width: 32px;
    height: 28px;
  }

  .rail .collapse {
    height: 25px;
  }

  .rail .active {
    background: #f4f4f7;
  }

  /* property panel */
  .panel {
    flex: none;
    width: 437px;
  }

  .panel h2 {
    margin: 0;
    padding: 6px 10px 4px;
    border-bottom: 1px solid #dadadd;
    font-size: 12px;
    font-weight: normal;
  }

  .add-row {
    position: relative;
    display: flex;
    align-items: center;
    gap: 17px;
    padding: 12px 15px 10px 10px;
  }

  .add-row button {
    display: flex;
    align-items: center;
    justify-content: center;
    flex: 1;
    gap: 2px;
    height: 20px;
    border: 1px solid #dadadd;
    background: #fff;
  }

  .panel-tabs {
    display: flex;
    height: 25px;
    padding-right: 1px;
  }

  .panel-tabs button {
    position: relative;
    flex: 1;
    background: #d9dadd;
  }

  .panel-tabs .active {
    background: #f0f0f2;
  }

  .tab-mark {
    inset: -5px -1px -1px;
    z-index: 1;
  }

  .source,
  .series {
    position: relative;
    display: flex;
    flex-direction: column;
    gap: 6px;
    margin: 4px 9px 0 2px;
    padding: 6px 9px 9px 113px;
  }

  .field {
    display: flex;
    align-items: center;
  }

  .field > label,
  .field > .label {
    flex: none;
    width: 86px;
    padding-top: 2px;
  }

  .main-field {
    margin-left: -106px;
  }

  .main-field > label {
    width: 85px;
  }

  .main-field .select {
    flex: 1;
  }

  .dataset {
    width: 96px;
    margin-right: 4px;
    padding-left: 1px;
  }

  .dataset select {
    padding-left: 5px;
  }

  .category-select {
    width: 102px;
  }

  .box {
    display: flex;
    align-items: center;
    justify-content: center;
    width: 22px;
    height: 20px;
    border: 1px solid #dadadd;
    background: #fff;
  }

  .joined {
    width: 20px;
    border-left: 0;
  }

  hr {
    height: 2px;
    margin: 2px 99px 0 92px;
    border: 0;
    background: #e9e8dd;
  }

  .series {
    gap: 0;
    margin-top: 5px;
    padding-top: 5px;
    padding-bottom: 7px;
  }

  .switch {
    display: flex;
    height: 25px;
    border: 1px solid #dadadd;
    background: #fff;
  }

  .switch button {
    flex: 1;
  }

  .switch .active {
    background: #419bf9;
  }

  .series-switch {
    width: 121px;
    height: 34px;
  }

  .series-switch button {
    padding: 0 8px 0 3px;
    text-align: left;
  }

  .fields {
    width: 207px;
    margin: 9px 0 0 1px;
    border-spacing: 0;
    table-layout: fixed;
  }

  .wide-col {
    width: 63px;
  }

  .remove-col {
    width: 24px;
  }

  .fields th {
    padding: 0 0 0 3px;
    font-weight: normal;
  }

  .fields th span {
    display: flex;
    justify-content: center;
    width: 55px;
    height: 17px;
    border-bottom: 1px solid #999;
    white-space: nowrap;
  }

  .fields td {
    height: 20px;
    padding: 0 0 0 10px;
    background: #e0e0e3;
    white-space: nowrap;
  }

  .fields .remove {
    padding: 0;
  }

  .remove button {
    display: block;
    margin: 0 8px 0 auto;
  }

  .fields .selected td {
    background: #419bf9;
  }

  .fields .selected td:first-child {
    border-radius: 4px 0 0 4px;
  }

  .fields .selected td:last-child {
    border-radius: 0 4px 4px 0;
  }

  .add-field {
    display: flex;
    align-items: center;
    justify-content: center;
    width: 207px;
    height: 20px;
    margin: 2px 0 0 1px;
    border: 1px dashed #999;
    background: #fff;
  }

  .filter {
    width: 221px;
    margin: 5px 0 0 102px;
  }

  .filter-head {
    display: flex;
    align-items: center;
    justify-content: space-between;
    width: 100%;
    height: 24px;
    margin-bottom: 10px;
    padding: 0 5px 0 4px;
    background: #ececec;
  }

  .check {
    display: flex;
    align-items: center;
    gap: 4px;
    height: 34px;
    padding-left: 4px;
  }

  .switch + .check {
    height: 26px;
    margin-bottom: 4px;
  }

  .check input {
    width: 13px;
    height: 13px;
    appearance: none;
    border: 1px solid #999;
    background: #f8f8fa;
  }

  .present {
    display: flex;
    align-items: center;
    justify-content: space-between;
    margin-top: 4px;
  }

  .present .select {
    width: 155px;
  }
</style>
